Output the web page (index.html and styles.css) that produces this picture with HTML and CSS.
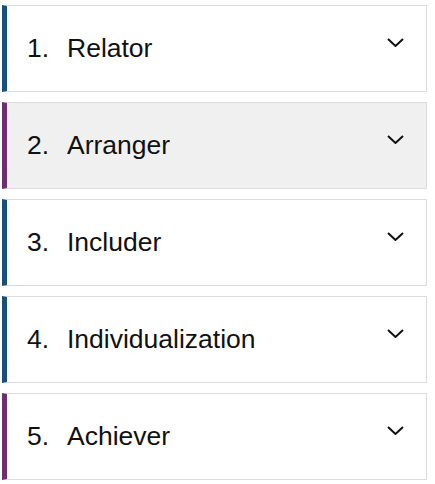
FILE: index.html
```html
<!DOCTYPE html>
<html>
<head>
<meta charset="utf-8">
<link rel="stylesheet" href="styles.css">
</head>
<body>
<div class="list">
  <div class="item blue"><span class="num">1.</span><span class="name">Relator</span><svg class="chev" viewBox="0 0 17 9" width="17" height="9"><path d="M1 1 L8.5 8 L16 1" fill="none" stroke="#111" stroke-width="2"/></svg></div>
  <div class="item purple active"><span class="num">2.</span><span class="name">Arranger</span><svg class="chev" viewBox="0 0 17 9" width="17" height="9"><path d="M1 1 L8.5 8 L16 1" fill="none" stroke="#111" stroke-width="2"/></svg></div>
  <div class="item blue"><span class="num">3.</span><span class="name">Includer</span><svg class="chev" viewBox="0 0 17 9" width="17" height="9"><path d="M1 1 L8.5 8 L16 1" fill="none" stroke="#111" stroke-width="2"/></svg></div>
  <div class="item blue"><span class="num">4.</span><span class="name">Individualization</span><svg class="chev" viewBox="0 0 17 9" width="17" height="9"><path d="M1 1 L8.5 8 L16 1" fill="none" stroke="#111" stroke-width="2"/></svg></div>
  <div class="item purple"><span class="num">5.</span><span class="name">Achiever</span><svg class="chev" viewBox="0 0 17 9" width="17" height="9"><path d="M1 1 L8.5 8 L16 1" fill="none" stroke="#111" stroke-width="2"/></svg></div>
</div>
</body>
</html>
```
FILE: styles.css
```css
html, body {
  margin: 0;
  padding: 0;
  background: #fff;
}
body {
  font-family: "Liberation Sans", Arial, sans-serif;
  color: #111;
}
.list {
  display: flex;
  flex-direction: column;
  gap: 10px;
  padding: 5px 8px 0 2px;
}
.item {
  box-sizing: border-box;
  height: 87px;
  border: 1px solid #dcdcdc;
  border-left: 5px solid #17507d;
  background: #fff;
  display: flex;
  align-items: center;
  padding-left: 20px;
  padding-right: 22px;
}
.item.purple {
  border-left-color: #6c2f72;
}
.item.active {
  background: #f0f0f0;
}
.num {
  width: 40px;
  font-size: 26.5px;
}
.name {
  flex: 1;
  font-size: 26.5px;
}
.chev {
  align-self: flex-start;
  margin-top: 32px;
}
```
